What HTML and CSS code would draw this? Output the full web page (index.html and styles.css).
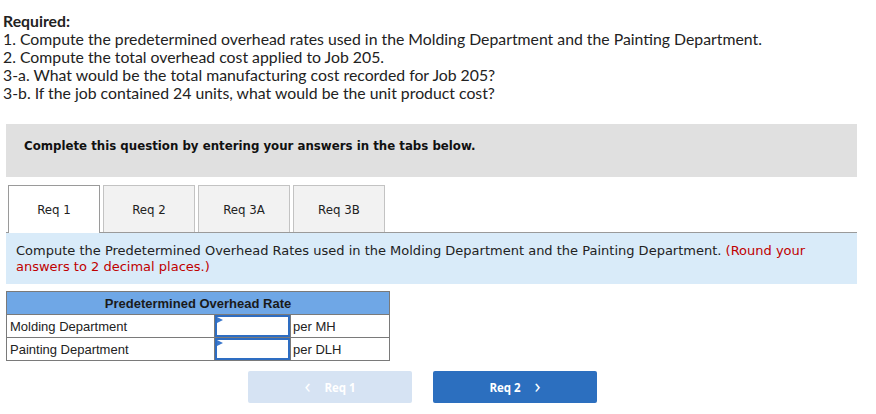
FILE: index.html
```html
<!DOCTYPE html>
<html>
<head>
<meta charset="utf-8">
<link rel="stylesheet" href="styles.css">
</head>
<body>
<div class="page">
  <div class="required">
    <div class="req-title">Required:</div>
    <div>1. Compute the predetermined overhead rates used in the Molding Department and the Painting Department.</div>
    <div>2. Compute the total overhead cost applied to Job 205.</div>
    <div>3-a. What would be the total manufacturing cost recorded for Job 205?</div>
    <div>3-b. If the job contained 24 units, what would be the unit product cost?</div>
  </div>

  <div class="notice">Complete this question by entering your answers in the tabs below.</div>

  <div class="tabs">
    <div class="tab active">Req 1</div>
    <div class="tab">Req 2</div>
    <div class="tab">Req 3A</div>
    <div class="tab">Req 3B</div>
  </div>

  <div class="instructions">
    <span>Compute the Predetermined Overhead Rates used in the Molding Department and the Painting Department.</span> <span class="red">(Round your</span> <span class="red">answers to 2 decimal places.)</span>
  </div>

  <table class="rates">
    <tr><th colspan="3">Predetermined Overhead Rate</th></tr>
    <tr>
      <td class="label">Molding Department</td>
      <td class="input-cell"><div class="input"><span class="flag"></span></div></td>
      <td class="unit">per MH</td>
    </tr>
    <tr>
      <td class="label">Painting Department</td>
      <td class="input-cell"><div class="input"><span class="flag"></span></div></td>
      <td class="unit">per DLH</td>
    </tr>
  </table>

  <div class="nav">
    <div class="btn prev"><span class="chev">&#x2039;</span><span>Req 1</span></div>
    <div class="btn next"><span>Req 2</span><span class="chev">&#x203A;</span></div>
  </div>
</div>
</body>
</html>
```

FILE: styles.css
```css
html, body {
  margin: 0;
  padding: 0;
  background: #ffffff;
}

.page {
  width: 851px;
  margin-left: 6px;
}

.required {
  margin-top: 12px;
  margin-left: -3px;
  font-family: Lato, "Open Sans", "Liberation Sans", sans-serif;
  font-size: 15.8px;
  line-height: 18px;
  color: #222;
}

.req-title {
  font-weight: 700;
}

.notice {
  margin-top: 22px;
  height: 53px;
  box-sizing: border-box;
  background: #e0e0e0;
  padding: 14px 0 0 18px;
  font-family: "DejaVu Sans Condensed", "DejaVu Sans", Tahoma, sans-serif;
  font-weight: 700;
  font-size: 13.1px;
  line-height: 16px;
  color: #111;
}

.tabs {
  margin-top: 8px;
  display: flex;
  gap: 3px;
  padding-left: 2px;
  border-bottom: 1px solid #9a9a9a;
  height: 47px;
}

.tab {
  width: 90px;
  height: 45px;
  padding-top: 1px;
  border: 1px solid #c3c3c3;
  border-bottom: none;
  background: #f2f2f2;
  display: flex;
  align-items: center;
  justify-content: center;
  font-family: "DejaVu Sans", Verdana, sans-serif;
  font-size: 11.8px;
  color: #222;
}

.tab.active {
  background: #ffffff;
  border-color: #9a9a9a;
  height: 46px;
  position: relative;
  z-index: 1;
}

.instructions {
  background: #d9ebf9;
  height: 51px;
  box-sizing: border-box;
  padding: 10px 10px 0 10px;
  font-family: "DejaVu Sans", Verdana, sans-serif;
  font-size: 13px;
  line-height: 16px;
  color: #222;
}

.red {
  color: #c00000;
}

.rates {
  margin-top: 7px;
  border-collapse: collapse;
  width: 384px;
  font-family: "Liberation Sans", Arial, sans-serif;
  font-size: 13px;
  color: #222;
}

.rates th {
  background: #6fa7e6;
  border: 1px solid #7a7a7a;
  height: 22px;
  padding: 0;
  font-weight: 700;
  font-size: 13px;
  color: #1a1a1a;
}

.rates td {
  border: 1px solid #7a7a7a;
  height: 22px;
  padding: 0;
}

.rates td.label {
  width: 204px;
  padding-left: 3px;
}

.rates td.input-cell {
  width: 75px;
}

.rates td.unit {
  padding-left: 2px;
}

.input {
  position: relative;
  height: 18px;
  border: 2px solid #2e6dc2;
  background: #fff;
}

.flag {
  position: absolute;
  left: 0;
  top: 0;
  width: 0;
  height: 0;
  border-top: 3px solid transparent;
  border-bottom: 3px solid transparent;
  border-left: 6px solid #3b78cc;
}

.nav {
  margin-top: 10px;
  display: flex;
  gap: 21px;
  padding-left: 242px;
}

.btn {
  width: 164px;
  height: 32px;
  border-radius: 2px;
  display: flex;
  align-items: center;
  justify-content: center;
  gap: 14px;
  font-family: "Open Sans", "Liberation Sans", sans-serif;
  font-weight: 700;
  font-size: 11.5px;
  color: #fff;
}

.btn .chev {
  font-size: 20px;
  font-weight: 400;
  line-height: 1;
  margin-top: -3px;
}

.btn.prev {
  background: #d6e3f3;
}

.btn.next {
  background: #2c6fbf;
}
```
